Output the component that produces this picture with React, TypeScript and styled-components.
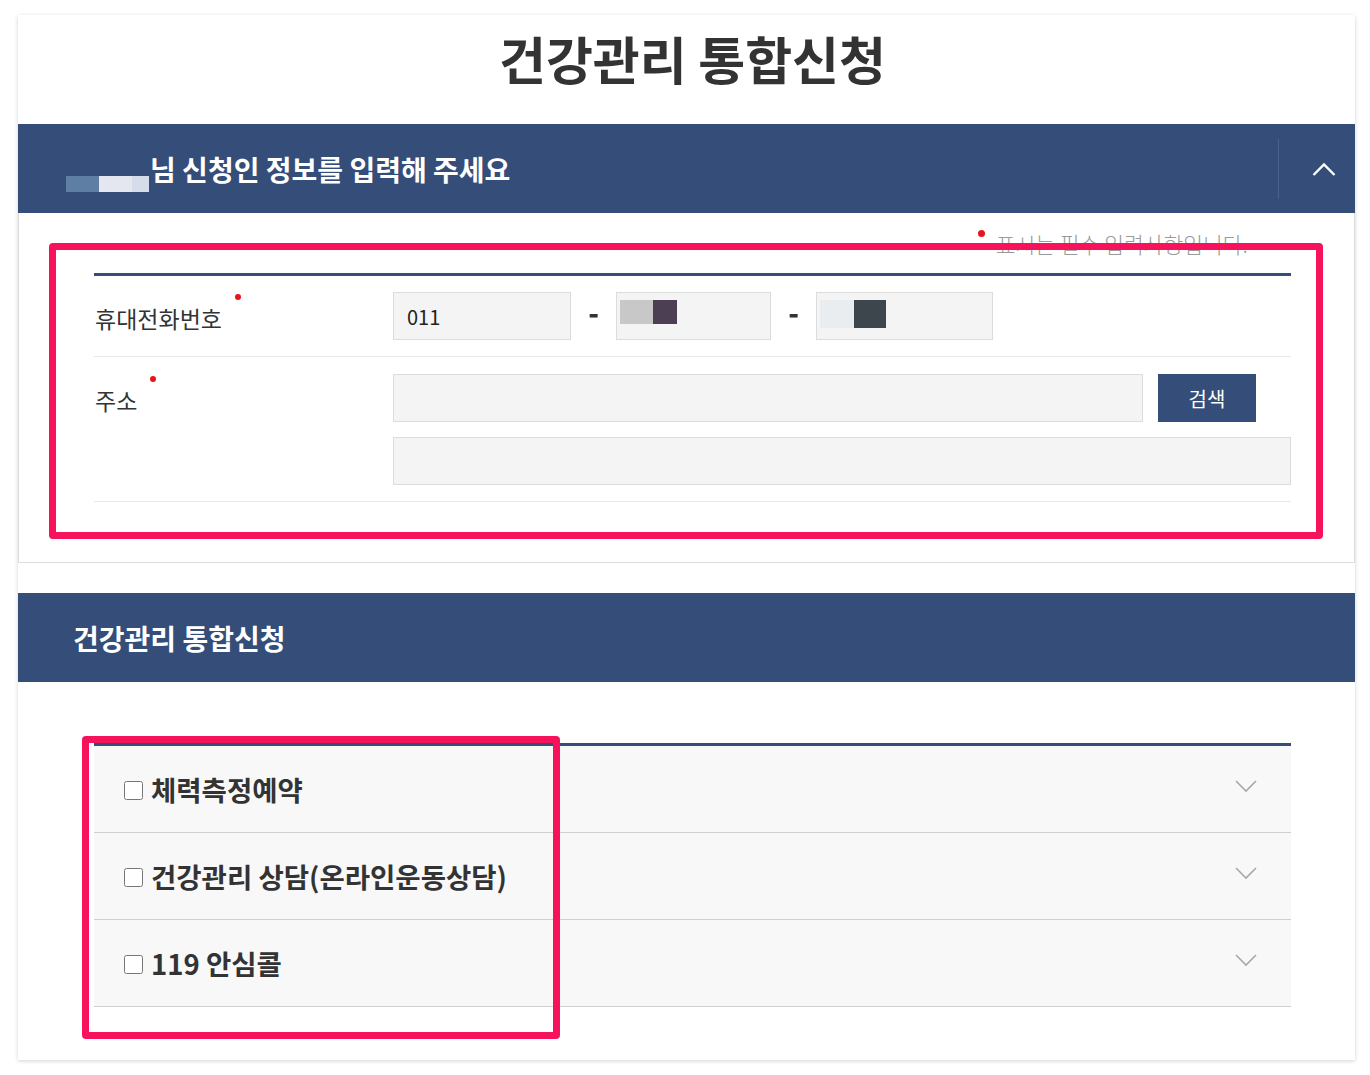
import React from "react";
import styled, { createGlobalStyle } from "styled-components";

//-----------------------STYLE-----------------------//

const GlobalStyle = createGlobalStyle`
  body {
    margin: 0;
    background: #fff;
    font-family: "Noto Sans CJK KR", "Noto Sans", sans-serif;
    color: #333;
  }
  * {
    box-sizing: border-box;
  }
`;

const PageStyle = styled.div`
  position: relative;
  width: 1370px;
  min-height: 1075px;
  padding-top: 15px;
`;

const CardStyle = styled.div`
  margin-left: 18px;
  width: 1337px;
  height: 1045px;
  background: #fff;
  box-shadow: 0 1px 4px rgba(0, 0, 0, 0.18);
  display: flex;
  flex-direction: column;
`;

const TitleStyle = styled.h1`
  margin: 0;
  height: 109px;
  padding: 11px 0 0 12px;
  text-align: center;
  font-size: 51px;
  line-height: 64px;
  font-weight: 700;
  color: #333;
`;

const BarStyle = styled.div`
  display: flex;
  align-items: center;
  height: 89px;
  background: #344d79;
  color: #fff;
`;

const BarTitle = styled.h2<{ $indent: number }>`
  margin: 0;
  flex: 1;
  padding-left: ${(p) => p.$indent}px;
  font-size: 28px;
  font-weight: 700;
  line-height: 1;
  display: flex;
  align-items: center;
`;

const RedactStyle = styled.div`
  display: flex;
  align-self: flex-end;
  margin-right: 1px;
  transform: translateY(9px);
`;

const Swatch = styled.div<{ $w: number; $c: string }>`
  width: ${(p) => p.$w}px;
  height: 16px;
  background: ${(p) => p.$c};
`;

const ToggleStyle = styled.div`
  display: flex;
  align-items: center;
  justify-content: center;
  width: 77px;
  height: 60px;
  padding-left: 14px;
  border-left: 1px solid #4a6189;
`;

const PanelStyle = styled.div`
  border: 1px solid #dcdcdc;
  border-top: none;
  padding: 19px 63px 60px 75px;
`;

const NoteStyle = styled.p`
  margin: 0 43px 17px 0;
  display: flex;
  justify-content: flex-end;
  font-size: 21.5px;
  line-height: 24px;
  font-weight: 300;
  color: #9a9a9a;
`;

const NoteDot = styled.span`
  width: 7px;
  height: 7px;
  border-radius: 50%;
  background: #e8141b;
  margin: -2px 11px 0 0;
`;

const TableStyle = styled.div`
  border-top: 3px solid #344d79;
`;

const RowStyle = styled.div<{ $pt: number }>`
  display: flex;
  align-items: flex-start;
  padding: ${(p) => p.$pt}px 0 16px;
  border-bottom: 1px solid #e9e9e9;
`;

const LabelCell = styled.div`
  width: 299px;
  flex-shrink: 0;
  height: 48px;
  display: flex;
  align-items: center;
  padding-left: 1px;
`;

const LabelText = styled.span`
  position: relative;
  font-size: 23px;
  line-height: 30px;
  color: #333;
  padding-top: 3px;
`;

const RequiredDot = styled.span`
  position: absolute;
  left: calc(100% + 13px);
  top: -6px;
  width: 6px;
  height: 6px;
  border-radius: 50%;
  background: #e8141b;
`;

const FieldsStyle = styled.div`
  flex: 1;
  display: flex;
  flex-direction: column;
  gap: 15px;
`;

const FieldLine = styled.div`
  display: flex;
  align-items: center;
`;

const FieldStyle = styled.div<{ $w?: number }>`
  width: ${(p) => (p.$w ? `${p.$w}px` : "auto")};
  flex: ${(p) => (p.$w ? "none" : "1")};
  height: 48px;
  background: #f4f4f4;
  border: 1px solid #dcdcdc;
  display: flex;
  align-items: center;
  padding-left: 13px;
  font-size: 20px;
  color: #222;
`;

const MaskStyle = styled.div`
  display: flex;
  align-self: flex-start;
  margin: 7px 0 0 -10px;
`;

const MaskPart = styled.div<{ $w: number; $h: number; $c: string }>`
  width: ${(p) => p.$w}px;
  height: ${(p) => p.$h}px;
  background: ${(p) => p.$c};
`;

const DashStyle = styled.span`
  width: 45px;
  text-align: center;
  font-size: 28px;
  font-weight: 900;
  color: #333;
  line-height: 1;
  margin-top: -8px;
`;

const SearchButton = styled.button`
  width: 98px;
  height: 48px;
  margin-left: 15px;
  margin-right: 35px;
  border: none;
  background: #344d79;
  color: #fff;
  font-family: inherit;
  font-size: 20px;
  cursor: pointer;
`;

const SectionGap = styled.div`
  height: 30px;
`;

const SectionBody = styled.div`
  flex: 1;
  padding: 61px 64px 0 76px;
`;

const AccordionStyle = styled.div`
  border-top: 3px solid #344d79;
`;

const ItemStyle = styled.div`
  display: flex;
  align-items: center;
  height: 87px;
  padding: 0 34px 0 30px;
  background: #f8f8f8;
  border-bottom: 1px solid #cfcfcf;
  svg {
    margin-top: -6px;
  }
`;

const ItemLabel = styled.label`
  flex: 1;
  display: flex;
  align-items: center;
  gap: 8px;
  font-size: 27.5px;
  font-weight: 700;
  color: #333;
  cursor: pointer;
  input {
    width: 19px;
    height: 19px;
    margin: 2px 0 0;
  }
`;

const MarkStyle = styled.div<{ $x: number; $y: number; $w: number; $h: number }>`
  position: absolute;
  left: ${(p) => p.$x}px;
  top: ${(p) => p.$y}px;
  width: ${(p) => p.$w}px;
  height: ${(p) => p.$h}px;
  border: 7px solid #f7125c;
  border-radius: 4px;
  pointer-events: none;
`;

//-----------------------ICONS-----------------------//

const ChevronUp = () => (
  <svg width="24" height="16" viewBox="0 0 24 16">
    <polyline
      points="1.5,14 12,3.5 22.5,14"
      fill="none"
      stroke="#fff"
      strokeWidth="2.4"
    />
  </svg>
);

const ChevronDown = () => (
  <svg width="22" height="14" viewBox="0 0 22 14">
    <polyline
      points="1,2 11,12 21,2"
      fill="none"
      stroke="#a8a8a8"
      strokeWidth="1.6"
    />
  </svg>
);

//-----------------------COMPONENT-----------------------//

const services = ["체력측정예약", "건강관리 상담(온라인운동상담)", "119 안심콜"];

const App = () => {
  return (
    <PageStyle>
      <GlobalStyle />
      <CardStyle>
        <TitleStyle>건강관리 통합신청</TitleStyle>

        <BarStyle>
          <BarTitle $indent={48}>
            <RedactStyle>
              <Swatch $w={33} $c="#5f7ea3" />
              <Swatch $w={33} $c="#e4e7f0" />
              <Swatch $w={17} $c="#d6dce9" />
            </RedactStyle>
            님 신청인 정보를 입력해 주세요
          </BarTitle>
          <ToggleStyle>
            <ChevronUp />
          </ToggleStyle>
        </BarStyle>

        <PanelStyle>
          <NoteStyle>
            <NoteDot />
            표시는 필수 입력사항입니다.
          </NoteStyle>
          <TableStyle>
            <RowStyle $pt={16}>
              <LabelCell>
                <LabelText>
                  휴대전화번호
                  <RequiredDot />
                </LabelText>
              </LabelCell>
              <FieldLine>
                <FieldStyle $w={178}>011</FieldStyle>
                <DashStyle>-</DashStyle>
                <FieldStyle $w={155}>
                  <MaskStyle>
                    <MaskPart $w={33} $h={24} $c="#c8c8c8" />
                    <MaskPart $w={24} $h={24} $c="#4d3f53" />
                  </MaskStyle>
                </FieldStyle>
                <DashStyle>-</DashStyle>
                <FieldStyle $w={177}>
                  <MaskStyle>
                    <MaskPart $w={34} $h={28} $c="#e9edf0" />
                    <MaskPart $w={32} $h={28} $c="#3c464c" />
                  </MaskStyle>
                </FieldStyle>
              </FieldLine>
            </RowStyle>
            <RowStyle $pt={17}>
              <LabelCell>
                <LabelText>
                  주소
                  <RequiredDot />
                </LabelText>
              </LabelCell>
              <FieldsStyle>
                <FieldLine>
                  <FieldStyle />
                  <SearchButton type="button">검색</SearchButton>
                </FieldLine>
                <FieldLine>
                  <FieldStyle />
                </FieldLine>
              </FieldsStyle>
            </RowStyle>
          </TableStyle>
        </PanelStyle>

        <SectionGap />

        <BarStyle>
          <BarTitle $indent={55}>건강관리 통합신청</BarTitle>
        </BarStyle>

        <SectionBody>
          <AccordionStyle>
            {services.map((name) => (
              <ItemStyle key={name}>
                <ItemLabel>
                  <input type="checkbox" />
                  {name}
                </ItemLabel>
                <ChevronDown />
              </ItemStyle>
            ))}
          </AccordionStyle>
        </SectionBody>
      </CardStyle>

      <MarkStyle $x={49} $y={243} $w={1274} $h={296} />
      <MarkStyle $x={82} $y={736} $w={478} $h={303} />
    </PageStyle>
  );
};

export default App;
